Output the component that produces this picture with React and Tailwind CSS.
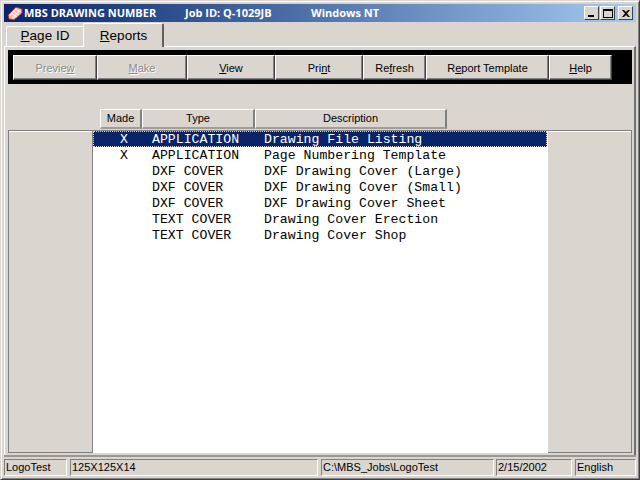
const Btn = ({ w, disabled, children }) => (
  <button className={`${w} h-[25px] shrink-0 pt-[1px] bg-[#dad6cf] border border-t-white border-l-white border-r-[#404040] border-b-[#404040] shadow-[inset_-1px_-1px_0_#808080] text-[11px] ${disabled ? "text-[#8a8a8a] [text-shadow:1px_1px_0_#fff]" : "text-black"}`}>
    {children}
  </button>
);
const Cap = ({ w, children }) => (
  <div className={`${w} h-[20px] shrink-0 bg-[#dad6cf] border-t border-l border-t-white border-l-white border-r-2 border-r-[#808080] border-b-2 border-b-[#a09c96] text-[11px] flex items-center justify-center`}>{children}</div>
);
const Status = ({ w, children }) => (
  <div className={`${w} h-[17px] shrink-0 border border-t-[#808080] border-l-[#808080] border-r-white border-b-white px-[1px] text-[11px] leading-[15px] whitespace-nowrap overflow-hidden`}>{children}</div>
);
const rows = [
  ["X", "APPLICATION", "Drawing File Listing"],
  ["X", "APPLICATION", "Page Numbering Template"],
  ["", "DXF COVER", "DXF Drawing Cover (Large)"],
  ["", "DXF COVER", "DXF Drawing Cover (Small)"],
  ["", "DXF COVER", "DXF Drawing Cover Sheet"],
  ["", "TEXT COVER", "Drawing Cover Erection"],
  ["", "TEXT COVER", "Drawing Cover Shop"],
];
const CapBtn = ({ children, className }) => (
  <div className={`w-[15px] h-[14px] bg-[#dad6cf] border border-t-white border-l-white border-r-[#404040] border-b-[#404040] flex items-center justify-center ${className || ""}`}>{children}</div>
);
export default function App() {
  return (
    <div className="w-[640px] h-[480px] bg-[#dad6cf] flex flex-col overflow-hidden border-t border-l border-t-[#dad6cf] border-l-[#dad6cf] border-r border-b border-r-[#404040] border-b-[#404040] shadow-[inset_1px_1px_0_#fff,inset_-1px_-1px_0_#808080] p-[3px] text-black font-['Liberation_Sans',sans-serif]">
      <div className="h-[18px] shrink-0 bg-gradient-to-r from-[#0a246a] to-[#a6caf0] flex items-center pl-[3px] pr-[3px] text-white font-bold text-[11px] font-['Open_Sans',sans-serif]">
        <svg width="16" height="16" viewBox="0 0 16 16" className="shrink-0">
          <path d="M1 10 L9 2 L15 4 L15 8 L7 15 L2 14 Z" fill="#f4b8b0" stroke="#a03030" strokeWidth="1" />
          <path d="M4 8 L10 12 M6 6 L12 10 M8 4 L14 7 M3 11 L9 4 M6 13 L12 6" stroke="#fff" strokeWidth="1" fill="none" />
        </svg>
        <span className="ml-[1px] w-[161px] shrink-0 whitespace-nowrap">MBS DRAWING NUMBER</span>
        <span className="w-[126px] shrink-0 whitespace-nowrap">Job ID: Q-1029JB</span>
        <span className="whitespace-nowrap">Windows NT</span>
        <div className="ml-auto flex items-center">
          <CapBtn><div className="w-[6px] h-[2px] bg-black mt-[6px] -ml-[1px]" /></CapBtn>
          <CapBtn className="ml-[1px]"><div className="w-[10px] h-[9px] border border-t-2 border-black" /></CapBtn>
          <CapBtn className="ml-[3px]">
            <svg width="8" height="7" viewBox="0 0 8 7"><path d="M0 0 L2 0 L4 2 L6 0 L8 0 L5 3.5 L8 7 L6 7 L4 5 L2 7 L0 7 L3 3.5 Z" fill="#000" /></svg>
          </CapBtn>
        </div>
      </div>
      <div className="h-[25px] shrink-0 flex items-end pl-[2px] text-[13.5px] -mb-[1px] z-10">
        <div className="w-[78px] h-[20px] mb-[1px] bg-[#dad6cf] border-t border-l border-t-white border-l-white border-r border-r-[#808080] rounded-t-[2px] flex items-center justify-center"><span><u>P</u>age ID</span></div>
        <div className="w-[81px] h-[24px] bg-[#dad6cf] border-t border-l border-t-white border-l-white border-r-2 border-r-[#606060] rounded-t-[2px] flex items-center justify-center -ml-[1px] pl-[1px]"><span className="-mb-[1px]"><u>R</u>eports</span></div>
      </div>
      <div className="flex-1 min-h-0 flex flex-col border-t border-l border-t-white border-l-white border-r-2 border-r-[#707070] pt-[3px] pl-[3px] pr-[2px]">
        <div className="h-[34px] shrink-0 bg-black flex items-center pl-[5px] pt-[1px]">
          <Btn w="w-[84px]" disabled>Previe<u>w</u></Btn>
          <Btn w="w-[90px]" disabled><u>M</u>ake</Btn>
          <Btn w="w-[88px]"><u>V</u>iew</Btn>
          <Btn w="w-[88px]">Pri<u>n</u>t</Btn>
          <Btn w="w-[63px]">Re<u>f</u>resh</Btn>
          <Btn w="w-[123px]">R<u>e</u>port Template</Btn>
          <Btn w="w-[63px]"><u>H</u>elp</Btn>
        </div>
        <div className="h-[25px] shrink-0" />
        <div className="flex shrink-0 pl-[92px]">
          <Cap w="w-[42px]">Made</Cap>
          <Cap w="w-[113px]">Type</Cap>
          <Cap w="w-[192px]">Description</Cap>
        </div>
        <div className="flex-1 min-h-0 flex border-t border-t-[#808080] mt-[1px] mb-[2px]">
          <div className="w-[84px] shrink-0 border-l border-b border-[#808080] shadow-[inset_0_1px_0_#fff]" />
          <div className="w-[456px] shrink-0 bg-white border-l border-l-[#808080] pr-[1px] font-['Liberation_Mono',monospace] text-[13.2px] leading-[15px]">
            {rows.map((r, i) => (
              <div key={i} className={`flex h-[16px] pt-[1px] whitespace-pre ${i === 0 ? "bg-[#0a246a] text-white outline-1 -outline-offset-1 outline-dotted outline-[#dad6cf]" : ""}`}>
                <span className="w-[59px] shrink-0 text-right pr-[24px]">{r[0]}</span>
                <span className="w-[112px] shrink-0">{r[1]}</span>
                <span>{r[2]}</span>
              </div>
            ))}
          </div>
          <div className="flex-1 border-r border-b border-[#808080] shadow-[inset_0_1px_0_#fff]" />
        </div>
      </div>
      <div className="h-[21px] shrink-0 border-t-2 border-t-[#9a9690] pt-[2px] flex">
        <Status w="w-[63px]">LogoTest</Status>
        <Status w="ml-[3px] w-[248px]">125X125X14</Status>
        <Status w="ml-[3px] w-[173px]">C:\MBS_Jobs\LogoTest</Status>
        <Status w="ml-[2px] w-[76px]">2/15/2002</Status>
        <Status w="ml-[3px] w-[61px]">English</Status>
      </div>
    </div>
  );
}
